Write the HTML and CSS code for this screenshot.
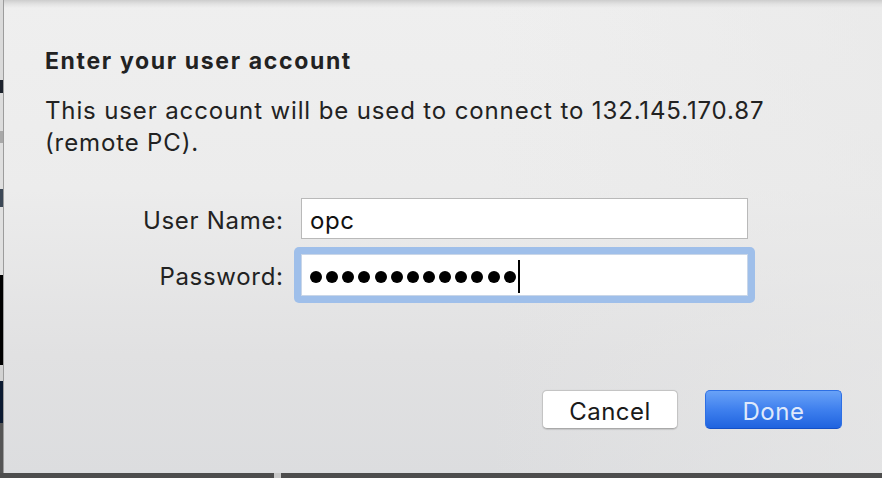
FILE: index.html
```html
<!DOCTYPE html>
<html>
<head>
<meta charset="utf-8">
<link rel="stylesheet" href="styles.css">
</head>
<body>
<div class="screen">
  <div class="main">
    <div class="edge">
      <div class="seg s1"></div>
      <div class="seg s2"></div>
      <div class="seg s3"></div>
      <div class="seg s4"></div>
      <div class="seg s5"></div>
      <div class="seg s6"></div>
      <div class="seg s7"></div>
      <div class="seg s8"></div>
      <div class="seg s9"></div>
      <div class="seg s10"></div>
      <div class="seg s11"></div>
    </div>
    <div class="dialog">
      <h1 class="title">Enter your user account</h1>
      <p class="message">This user account will be used to connect to 132.145.170.87<br>(remote PC).</p>
      <div class="form">
        <div class="label">User Name:</div>
        <div class="field"><span class="value">opc</span></div>
        <div class="label">Password:</div>
        <div class="ring">
          <div class="field">
            <span class="dots">
              <i></i><i></i><i></i><i></i><i></i><i></i><i></i><i></i><i></i><i></i><i></i><i></i><i></i>
            </span>
            <span class="caret"></span>
          </div>
        </div>
      </div>
      <div class="buttons">
        <button class="btn cancel">Cancel</button>
        <button class="btn done">Done</button>
      </div>
    </div>
  </div>
  <div class="bottom">
    <div class="bottom-left"></div>
    <div class="bottom-chip"></div>
  </div>
</div>
</body>
</html>
```

FILE: styles.css
```css
html, body {
  margin: 0;
  padding: 0;
  width: 882px;
  height: 478px;
  overflow: hidden;
  background: #4d4d4d;
}

.screen {
  width: 882px;
  height: 478px;
  display: flex;
  flex-direction: column;
  font-family: Inter, "Liberation Sans", Arial, sans-serif;
  color: #222;
}

.main {
  display: flex;
  height: 473px;
}

.edge {
  width: 3px;
  display: flex;
  flex-direction: column;
}
.seg { flex: none; }
.s1 { height: 80px; background: #dadada; }
.s2 { height: 13px; background: #1c222c; }
.s3 { height: 38px; background: #dcdcdc; }
.s4 { height: 12px; background: #a9a9a9; }
.s5 { height: 46px; background: #dfdfdf; }
.s6 { height: 18px; background: #3c4856; }
.s7 { height: 68px; background: #e0e0e0; }
.s8 { height: 90px; background: #000; }
.s9 { height: 16px; background: #d2d2d2; }
.s10 { height: 42px; background: #0b1a31; }
.s11 { flex: 1; background: #555; }

.dialog {
  flex: 1;
  border-left: 1px solid #9c9c9c;
  padding: 47px 40px 0 41px;
  background:
    linear-gradient(to bottom, #cdcdcd 0px, #e2e2e2 4px, rgba(239,239,239,0) 8px),
    linear-gradient(to right, rgba(236,236,236,0) 55%, rgba(232,232,232,0.6) 100%),
    linear-gradient(to bottom, #efefef 0%, #ececec 40%, #e1e1e2 75%, #dcdddf 100%);
}

.title {
  margin: 0;
  font-size: 23px;
  line-height: 28px;
  font-weight: 700;
  letter-spacing: 1.65px;
  color: #222;
}

.message {
  margin: 20px 0 0;
  font-size: 24px;
  line-height: 32px;
  letter-spacing: 0.87px;
  color: #222;
}

.form {
  margin-top: 39px;
  display: grid;
  grid-template-columns: 238px 447px;
  column-gap: 18px;
  row-gap: 15px;
}

.label {
  text-align: right;
  font-size: 24px;
  line-height: 26px;
  letter-spacing: 0.7px;
  padding-top: 10px;
  margin-right: -0.7px;
  color: #222;
}

.field {
  box-sizing: border-box;
  height: 41px;
  background: #fff;
  border: 1px solid #b9b9b9;
  padding: 9px 9px 0 8px;
  font-size: 24px;
  line-height: 26px;
  letter-spacing: 0.6px;
  color: #111;
  display: flex;
  align-items: flex-start;
}

.ring {
  margin: -7px;
  padding: 7px;
  border-radius: 5px;
  background: #9fbfea;
}
.ring .field {
  height: 42px;
  border-color: #c9d6e8;
  padding-top: 0;
  align-items: center;
}

.dots {
  display: flex;
  gap: 4.15px;
  margin-top: 4px;
}
.dots i {
  display: block;
  width: 12px;
  height: 12px;
  border-radius: 50%;
  background: #000;
}

.caret {
  display: block;
  width: 2px;
  height: 33px;
  background: #000;
  margin-left: 2px;
  margin-top: 3px;
}

.buttons {
  margin-top: 94px;
  display: flex;
  justify-content: flex-end;
  gap: 27px;
}

.btn {
  box-sizing: border-box;
  height: 39px;
  border-radius: 5px;
  font-family: Inter, "Liberation Sans", Arial, sans-serif;
  font-size: 24px;
  line-height: 26px;
  letter-spacing: 0.5px;
  padding: 4px 0 0;
  margin: 0;
}

.cancel {
  width: 136px;
  background: #fff;
  color: #1a1a1a;
  border: 1px solid #c4c4c4;
  border-bottom-color: #a9a9a9;
  box-shadow: 0 0.5px 1px rgba(0,0,0,0.12);
}

.done {
  width: 137px;
  background: linear-gradient(to bottom, #69a2f7 0%, #3f80ee 50%, #1f63df 100%);
  color: #dfe9fb;
  border: 1px solid #2d6fe4;
  border-bottom-color: #1450c6;
}

.bottom {
  height: 5px;
  display: flex;
  background: #4d4d4d;
}
.bottom-left {
  width: 274px;
}
.bottom-chip {
  width: 7px;
  background: #c8c8c8;
}
```
